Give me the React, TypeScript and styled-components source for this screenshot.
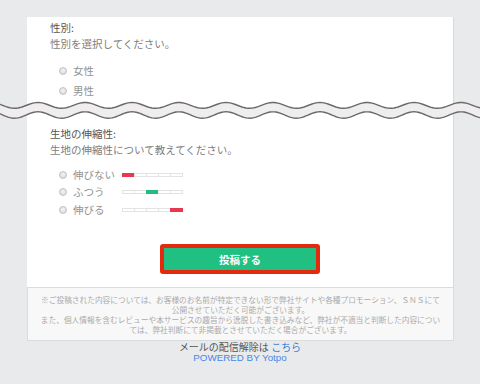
import React from 'react';
import styled, { createGlobalStyle } from 'styled-components';

const Global = createGlobalStyle`
  html, body { margin: 0; padding: 0; background: #e9eaec; }
  body { font-family: "Noto Sans CJK JP", "Noto Sans", sans-serif; }
  * { box-sizing: border-box; }
`;

const Page = styled.div`
  width: 480px;
  height: 384px;
  overflow: hidden;
  padding-top: 17px;
  display: flex;
  flex-direction: column;
  align-items: flex-start;
`;

const CardPart = styled.section<{ $pt: number }>`
  margin-left: 27px;
  width: 427px;
  background: #fff;
  border-right: 1px solid #d9d9d9;
  padding: ${(p) => p.$pt}px 0 0 23px;
  display: flex;
  flex-direction: column;
`;

const Label = styled.div`
  font-size: 10.5px;
  line-height: 16px;
  color: #555;
`;

const Desc = styled.div`
  font-size: 10.5px;
  line-height: 16px;
  color: #7d7d7d;
`;

const OptionList = styled.div<{ $mt: number }>`
  margin-top: ${(p) => p.$mt}px;
  padding-left: 9px;
  display: flex;
  flex-direction: column;
`;

const OptionRow = styled.div<{ $h: number }>`
  height: ${(p) => p.$h}px;
  display: grid;
  grid-template-columns: 8px 43px 61px;
  column-gap: 6px;
  align-items: center;
`;

const Radio = styled.span`
  width: 8px;
  height: 8px;
  border-radius: 50%;
  border: 1px solid #c2c2c2;
  background: radial-gradient(circle at 50% 40%, #f4f4f4 0%, #dedede 70%, #d2d2d2 100%);
`;

const OptionText = styled.span`
  font-size: 10.5px;
  line-height: 14px;
  color: #929292;
  white-space: nowrap;
`;

const Scale = styled.div`
  display: flex;
  height: 4px;
`;

const Seg = styled.span<{ $color?: string }>`
  flex: 1;
  height: 4px;
  background: ${(p) => p.$color ?? 'transparent'};
  border: 1px solid ${(p) => p.$color ?? '#e3e3e3'};
  margin-left: -1px;
  &:first-child { margin-left: 0; }
`;

const ButtonWrap = styled.div`
  margin: 25.75px 0 13px -23px;
  display: flex;
  justify-content: center;
`;

const Submit = styled.button`
  width: 160px;
  height: 30px;
  border: 4px solid #e42a0e;
  border-radius: 3px;
  background: #1fc081;
  color: #fff;
  font-family: "Noto Sans CJK JP", sans-serif;
  font-weight: 700;
  font-size: 10.5px;
  padding: 0;
  cursor: pointer;
`;

const NoteBox = styled.div`
  margin-left: 27px;
  width: 427px;
  border: 1px solid #dcdcdc;
  background: #f8f8f8;
  padding: 7px 0 5px;
  font-size: 7.7px;
  line-height: 10px;
  color: #ababab;
  text-align: center;
  white-space: nowrap;
`;

const Footer = styled.div`
  width: 480px;
  display: flex;
  flex-direction: column;
  align-items: center;
`;

const Unsub = styled.div`
  font-size: 10px;
  line-height: 11px;
  color: #555;
  a { color: #3b7ddd; text-decoration: none; }
`;

const Powered = styled.div`
  font-family: "Liberation Sans", Arial, sans-serif;
  font-size: 9.8px;
  line-height: 11px;
  color: #4a86e8;
`;

const WaveSvg = styled.svg`
  display: block;
  flex-shrink: 0;
`;

const WAVE_H = 19;

function wavePoints(c: number, a: number): [number, number][] {
  const pts: [number, number][] = [];
  for (let x = -2; x <= 482; x += 2) {
    const y = c - a * Math.cos((2 * Math.PI * (x - 38)) / 47);
    pts.push([x, y]);
  }
  return pts;
}

const Wave: React.FC = () => {
  const up = wavePoints(4.4, 2.9);
  const lo = wavePoints(14, 3.2);
  const toD = (p: [number, number][]) =>
    'M' + p.map(([x, y]) => `${x} ${y.toFixed(2)}`).join(' L');
  const band =
    toD(up) +
    ' L' +
    [...lo]
      .reverse()
      .map(([x, y]) => `${x} ${y.toFixed(2)}`)
      .join(' L') +
    ' Z';
  return (
    <WaveSvg width={480} height={WAVE_H} viewBox={`0 0 480 ${WAVE_H}`}>
      <rect width={480} height={WAVE_H} fill="#e9eaec" />
      <rect x={27} width={426} height={WAVE_H} fill="#fff" />
      <rect x={453} width={1} height={WAVE_H} fill="#d9d9d9" />
      <path d={band} fill="#efeded" />
      <path d={toD(up)} fill="none" stroke="#6a6a6a" strokeWidth={1.4} />
      <path d={toD(lo)} fill="none" stroke="#6a6a6a" strokeWidth={1.4} />
    </WaveSvg>
  );
};

const RED = '#e8384f';
const GREEN = '#1dbf80';

const stretch = [
  { label: '伸びない', idx: 0, color: RED },
  { label: 'ふつう', idx: 2, color: GREEN },
  { label: '伸びる', idx: 4, color: RED },
];

export default function App() {
  return (
    <>
      <Global />
      <Page>
        <CardPart $pt={2.5}>
          <Label>性別:</Label>
          <Desc>性別を選択してください。</Desc>
          <OptionList $mt={9.5}>
            {['女性', '男性'].map((g) => (
              <OptionRow key={g} $h={20}>
                <Radio />
                <OptionText>{g}</OptionText>
              </OptionRow>
            ))}
          </OptionList>
        </CardPart>
        <Wave />
        <CardPart $pt={5.5}>
          <Label>生地の伸縮性:</Label>
          <Desc>生地の伸縮性について教えてください。</Desc>
          <OptionList $mt={8.25}>
            {stretch.map((s) => (
              <OptionRow key={s.label} $h={17.5}>
                <Radio />
                <OptionText>{s.label}</OptionText>
                <Scale>
                  {[0, 1, 2, 3, 4].map((i) => (
                    <Seg key={i} $color={i === s.idx ? s.color : undefined} />
                  ))}
                </Scale>
              </OptionRow>
            ))}
          </OptionList>
          <ButtonWrap>
            <Submit>投稿する</Submit>
          </ButtonWrap>
        </CardPart>
        <NoteBox>
          ※ご投稿された内容については、お客様のお名前が特定できない形で弊社サイトや各種プロモーション、ＳＮＳにて
          <br />
          公開させていただく可能がございます。
          <br />
          また、個人情報を含むレビューや本サービスの趣旨から逸脱した書き込みなど、弊社が不適当と判断した内容につい
          <br />
          ては、弊社判断にて非掲載とさせていただく場合がございます。
        </NoteBox>
        <Footer>
          <Unsub>
            メールの配信解除は <a href="#">こちら</a>
          </Unsub>
          <Powered>POWERED BY Yotpo</Powered>
        </Footer>
      </Page>
    </>
  );
}
